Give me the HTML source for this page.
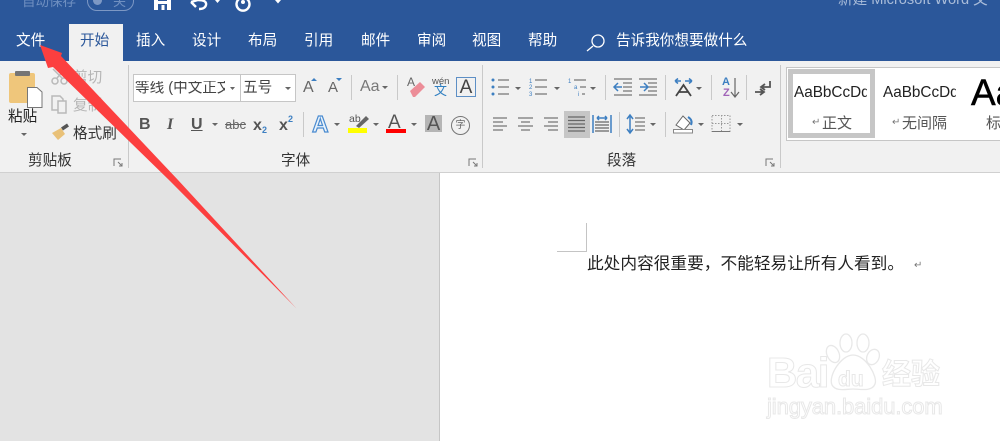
<!DOCTYPE html>
<html lang="zh"><head><meta charset="utf-8"><style>
html,body{margin:0;padding:0;width:1000px;height:441px;overflow:hidden;background:#fff}
body{position:relative;font-family:"Liberation Sans","Noto Sans CJK SC",sans-serif}
.a{position:absolute;white-space:nowrap;line-height:1}
.t{color:#fff;font-size:14.6px;top:34px}
.k{color:#333;font-size:14.6px}
.w{color:#fff;font-weight:bold;-webkit-text-stroke:1px #e8e8e8}
svg{position:absolute;left:0;top:0}
</style></head><body>
<div class="a" style="left:0;top:0;width:1000px;height:61px;background:#2b579a"></div>
<div class="a" style="left:69px;top:24px;width:54px;height:37px;background:#f1f1f1"></div>
<div class="a" style="left:0;top:61px;width:1000px;height:111px;background:#f1f1f1"></div>
<div class="a" style="left:0;top:172px;width:1000px;height:1px;background:#d0d0d0"></div>
<div class="a" style="left:0;top:173px;width:440px;height:268px;background:#e3e3e3"></div>
<div class="a" style="left:439px;top:173px;width:1px;height:268px;background:#c6c6c6"></div>

<div class="a" style="left:22px;top:-5px;font-size:13.5px;color:#6f8fc0">自动保存</div>
<div class="a" style="left:87px;top:-9px;width:47px;height:20px;border:1px solid #7d98c4;border-radius:10px;box-sizing:border-box"></div>
<div class="a" style="left:93px;top:-4px;width:9px;height:9px;border-radius:50%;background:#7d98c4"></div>
<div class="a" style="left:113px;top:-5px;font-size:13px;color:#6f8fc0">关</div>
<div class="a" style="left:838px;top:-7px;font-size:14.6px;color:#a9bcd9">新建 Microsoft Word 文</div>

<div class="a t" style="left:16px">文件</div>
<div class="a t" style="left:80px;color:#2b579a">开始</div>
<div class="a t" style="left:136px">插入</div>
<div class="a t" style="left:192px">设计</div>
<div class="a t" style="left:248px">布局</div>
<div class="a t" style="left:304px">引用</div>
<div class="a t" style="left:361px">邮件</div>
<div class="a t" style="left:417px">审阅</div>
<div class="a t" style="left:472px">视图</div>
<div class="a t" style="left:528px">帮助</div>
<div class="a t" style="left:616px">告诉我你想要做什么</div>

<div class="a k" style="left:8px;top:110px;color:#222">粘贴</div>
<div class="a k" style="left:73px;top:71px;color:#b5b5b5">剪切</div>
<div class="a k" style="left:73px;top:99px;color:#b5b5b5">复制</div>
<div class="a k" style="left:73px;top:127px;color:#333">格式刷</div>
<div class="a k" style="left:28px;top:154px">剪贴板</div>
<div class="a k" style="left:281px;top:154px">字体</div>
<div class="a k" style="left:607px;top:154px">段落</div>

<div class="a" style="left:133px;top:74px;width:108px;height:28px;background:#fff;border:1px solid #c6c6c6;box-sizing:border-box"></div>
<div class="a" style="left:240px;top:74px;width:56px;height:28px;background:#fff;border:1px solid #c6c6c6;box-sizing:border-box"></div>
<div class="a" style="left:135px;top:81px;width:90px;overflow:hidden;font-size:14.6px;color:#444">等线 (中文正文)</div>
<div class="a" style="left:243px;top:81px;font-size:14.6px;color:#444">五号</div>

<div class="a" style="left:303px;top:80px;font-size:16px;color:#666">A</div>
<div class="a" style="left:328px;top:80px;font-size:15px;color:#666">A</div>
<div class="a" style="left:360px;top:79px;font-size:16px;color:#777">Aa</div>
<div class="a" style="left:407px;top:76px;font-size:12px;color:#666">A</div>
<div class="a" style="left:432px;top:77px;font-size:9.5px;color:#555">wén</div>
<div class="a" style="left:434px;top:84px;font-size:13px;color:#2f7fc1">文</div>
<div class="a" style="left:456px;top:77px;width:20px;height:20px;border:1px solid #5d8fc5;box-sizing:border-box;font-size:19px;color:#444;text-align:center;line-height:19px">A</div>

<div class="a" style="left:139px;top:117px;font-size:16px;font-weight:bold;color:#555">B</div>
<div class="a" style="left:167px;top:117px;font-size:16px;font-style:italic;font-weight:bold;font-family:'Liberation Serif',serif;color:#555">I</div>
<div class="a" style="left:191px;top:117px;font-size:16px;font-weight:bold;text-decoration:underline;color:#555">U</div>
<div class="a" style="left:225px;top:118px;font-size:13px;text-decoration:line-through;color:#666">abc</div>
<div class="a" style="left:253px;top:118px;font-size:16px;font-weight:bold;color:#555">x</div>
<div class="a" style="left:262px;top:126px;font-size:9px;font-weight:bold;color:#3d7fc1">2</div>
<div class="a" style="left:279px;top:118px;font-size:16px;font-weight:bold;color:#555">x</div>
<div class="a" style="left:288px;top:115px;font-size:9px;font-weight:bold;color:#3d7fc1">2</div>
<div class="a" style="left:349px;top:114px;font-size:10.5px;color:#555">ab</div>
<div class="a" style="left:388px;top:113px;font-size:19px;color:#555">A</div>
<div class="a" style="left:425px;top:115px;width:17px;height:17px;background:#b5b5b5;font-size:20px;color:#555;text-align:center;line-height:18px">A</div>
<div class="a" style="left:451px;top:116px;width:17px;height:17px;border:1px solid #777;border-radius:50%;font-size:10px;color:#666;text-align:center;line-height:17px">字</div>

<div class="a" style="left:564px;top:111px;width:26px;height:27px;background:#c6c6c6"></div>

<div class="a" style="left:786px;top:67px;width:214px;height:74px;background:#fff;border:1px solid #c6c6c6;border-right:0;box-sizing:border-box"></div>
<div class="a" style="left:788px;top:69px;width:87px;height:69px;border:5px solid #c6c6c6;box-sizing:border-box;background:#fff"></div>
<div class="a" style="left:794px;top:85px;width:73px;overflow:hidden;font-size:15.3px;color:#222">AaBbCcDd</div>
<div class="a" style="left:883px;top:85px;width:73px;overflow:hidden;font-size:15.3px;color:#222">AaBbCcDd</div>
<div class="a" style="left:971px;top:74px;font-size:37px;color:#000;-webkit-text-stroke:.5px #000">Aa</div>
<div class="a" style="left:822px;top:116px;font-size:15px;color:#555">正文</div>
<div class="a" style="left:902px;top:116px;font-size:15px;color:#555">无间隔</div>
<div class="a" style="left:986px;top:116px;font-size:15px;color:#555">标</div>
<div class="a" style="left:812px;top:118px;font-size:10px;color:#777">↵</div>
<div class="a" style="left:892px;top:118px;font-size:10px;color:#777">↵</div>

<div class="a" style="left:587px;top:256px;font-size:16.7px;color:#222">此处内容很重要，不能轻易让所有人看到。</div>
<div class="a" style="left:914px;top:261px;font-size:10px;color:#777">↵</div>

<div class="a w" style="left:767px;top:352px;font-size:42px;letter-spacing:-1.5px">Bai</div>
<div class="a w" style="left:882px;top:361px;font-size:29px">经验</div>
<div class="a" style="left:767px;top:396px;font-size:22px;letter-spacing:-.1px;color:#fff;-webkit-text-stroke:1px #e8e8e8">jingyan.baidu.com</div>

<svg width="1000" height="441" viewBox="0 0 1000 441">
 <!-- QAT icons -->
 <rect x="154" y="-3" width="17" height="13" fill="#fff"/>
 <rect x="158" y="-3" width="9" height="4" fill="#2b579a"/>
 <rect x="158" y="4" width="9" height="6" fill="#2b579a"/>
 <rect x="161.500" y="5" width="3" height="5" fill="#fff"/>
 <g fill="none" stroke="#fff" stroke-width="2.400">
  <path d="M191 2 196 7M191 2 198 0Q207 0 206 5 205 9 199 9"/>
  <path d="M239 -1A6.500 6.500 0 1 0 247 -1"/>
 </g>
 <path d="M215 0h5l-2.500 3zM275 0h6l-3 3.500z" fill="#fff"/>
 <circle cx="243" cy="2" r="2" fill="#fff"/>
 <!-- search -->
 <g fill="none" stroke="#fff" stroke-width="1.300"><circle cx="598" cy="41" r="6"/><path d="M593 46 587 51"/></g>
 <!-- separators -->
 <g stroke="#c9c9c9">
  <path d="M128.500 65V168M482.500 65V168M780.500 65V168"/>
  <path d="M303.500 112V137M351.500 75V100M397.500 75V100M605.500 75V100M665.500 75V100M711.500 75V100M746.500 75V100M619.500 112V137M665.500 112V137"/>
 </g>
 <!-- paste -->
 <rect x="9" y="73" width="26" height="30" rx="2" fill="#efc67b"/>
 <rect x="15" y="71" width="15" height="5" rx="1" fill="#757575"/>
 <path d="M27.500 87.500H37L42 92V107.500H27.500z" fill="#fff" stroke="#777"/>
 <path d="M21 133h6l-3 3z" fill="#666"/>
 <!-- cut / copy / brush -->
 <g fill="none" stroke="#b9b9b9" stroke-width="1.500"><circle cx="55" cy="81" r="3"/><circle cx="64" cy="81" r="3"/><path d="M53 69 62 78M65 69 57 78"/><path d="M52 96h8l3 3v11H52z"/><path d="M58 101h8v12H58z" fill="#f1f1f1"/></g>
 <path d="M52 133 61 128 65 134 58 140z" fill="#e9c178"/><path d="M62 129 68 125" stroke="#555" stroke-width="3.500"/>
 <!-- launchers -->
 <g fill="none" stroke="#777"><path d="M114 166V159H121M118 162 122 166M122 163V166H119"/><path d="M469 166V159H476M473 162 477 166M477 163V166H474"/><path d="M766 166V159H773M770 162 774 166M774 163V166H771"/></g>
 <!-- dropdown carets -->
 <g fill="#666">
  <path d="M230 87h5l-2.500 3zM285 87h6l-3 3zM382 86h6l-3 3z"/>
  <path d="M212 123h6l-3 3zM334 123h6l-3 3zM373 123h6l-3 3zM411 123h6l-3 3zM515 87h6l-3 3zM554 87h6l-3 3zM590 87h6l-3 3zM696 87h6l-3 3z"/>
  <path d="M650 123h6l-3 3zM698 123h6l-3 3zM737 123h6l-3 3z"/>
 </g>
 <path d="M311 81l3-3 3 3zM336 78h6l-3 3z" fill="#3d7fc1"/>
 <!-- eraser -->
 <path d="M410 91 420 82 425 87 415 97H413z" fill="#ec8d98"/>
 <!-- text effect A -->
 <text x="312" y="132" font-size="23" font-weight="bold" font-family="Liberation Sans" fill="#eaf3fb" stroke="#4a8bd0" stroke-width="1.200">A</text>
 <!-- font colors -->
 <rect x="348" y="128" width="19" height="5" fill="#ff0"/>
 <rect x="386" y="129" width="20" height="4" fill="#f00"/>
 <path d="M356 126 366 116 369 119 359 128z" fill="#666"/>
 <!-- lists -->
 <g fill="#3d7fc1"><circle cx="493" cy="80" r="1.500"/><circle cx="493" cy="87" r="1.500"/><circle cx="493" cy="94" r="1.500"/></g>
 <g fill="#3d7fc1" font-size="6" font-family="Liberation Sans">
  <text x="529" y="83">1</text><text x="529" y="89">2</text><text x="529" y="96">3</text>
  <text x="568" y="83">1</text><text x="574" y="89">a</text><text x="578" y="96">i</text>
 </g>
 <g stroke="#777" stroke-width="1.200" fill="none">
  <path d="M498 80h11M498 87h11M498 94h11M535 80h12M535 87h12M535 94h12M574 80h12M580 87h6M582 94h3"/>
  <path d="M614 79h18M623 83h9M623 87h9M623 91h9M614 95h18M639 79h18M639 95h18M648 83h9M648 87h9M648 91h9"/>
  <path d="M493 118h14M493 122h10M493 126h14M493 130h10"/>
  <path d="M518 118h15M521 122h9M518 126h15M521 130h9"/>
  <path d="M544 118h14M548 122h10M544 126h14M548 130h10"/>
  <path d="M568 117h17M568 120.500h17M568 124h17M568 127.500h17M568 131h17" stroke="#666"/>
  <path d="M595 122h14M595 125h14M595 128h14M595 131h14" stroke="#666"/>
  <path d="M635 118h10M635 122h10M635 126h10M635 130h10"/>
 </g>
 <g stroke="#3d7fc1" stroke-width="1.500" fill="none">
  <path d="M622 87h-7M618 83 614 87 618 91M640 87h7M644 83 648 87 644 91"/>
  <path d="M593 115V133M611 115V133M597 118h10M597 118l2-2M597 118l2 2M607 118l-2-2M607 118l-2 2"/>
  <path d="M630 116V132M627 119 630 115 633 119M627 129 630 133 633 129"/>
  <path d="M675 81h6M675 81l3-2.500M675 81l3 2.500M685 81h7M692 81l-3-2.500M692 81l-3 2.500"/>
 </g>
 <!-- A expand, sort, pilcrow -->
 <path d="M676 96 683.500 85 691 96M679 92h9" fill="none" stroke="#444" stroke-width="1.800"/>
 <text x="722" y="85" font-size="11" font-weight="bold" font-family="Liberation Sans" fill="#3d7fc1">A</text>
 <text x="723" y="96" font-size="11" font-weight="bold" font-family="Liberation Sans" fill="#a164b8">Z</text>
 <path d="M735 78V96M731 92 735 97 739 92" fill="none" stroke="#666" stroke-width="1.200"/>
 <path d="M770 81V87H762M765 84 761 87 765 90M755 92H763M760 89 764 92 760 95" fill="none" stroke="#555" stroke-width="1.800"/>
 <!-- fill + border -->
 <path d="M676 125 683 116 690 123 684 130z" fill="#fff" stroke="#666"/>
 <rect x="673.500" y="129.500" width="19" height="3.500" fill="#fff" stroke="#888"/>
 <path d="M688 117Q693 120 691 125" stroke="#3d7fc1" stroke-width="2" fill="none"/>
 <path d="M712 115.500H730V131.500H712zM721.500 115V132M712 123.500H730" fill="none" stroke="#999" stroke-dasharray="1.500 1.500"/>
 <path d="M712 131.500H730" stroke="#777"/>
 <!-- crop mark -->
 <path d="M586.500 223V251.500H557" fill="none" stroke="#c4c4c4"/>
 <!-- paw -->
 <g fill="#fff" stroke="#e8e8e8" stroke-width="1.300">
  <ellipse cx="833" cy="354" rx="6" ry="9" transform="rotate(-25 833 354)"/>
  <ellipse cx="846" cy="343" rx="6" ry="9"/>
  <ellipse cx="863" cy="343" rx="6" ry="9"/>
  <ellipse cx="873" cy="357" rx="6" ry="8" transform="rotate(25 873 357)"/>
  <path d="M853 355C866 355 878 377 875 384 872 392 860 389 853 389 846 389 836 392 832 385 828 376 841 355 853 355z"/>
 </g>
 <text x="838" y="386" font-size="21" font-weight="bold" font-family="Liberation Sans" fill="#fff" stroke="#e8e8e8">du</text>
 <!-- arrow -->
 <path d="M40 45 62 53 61 56 178 180 296.500 308.500 170 181 53 67 48 68z" fill="#fc3f3f"/>
</svg>
</body></html>
